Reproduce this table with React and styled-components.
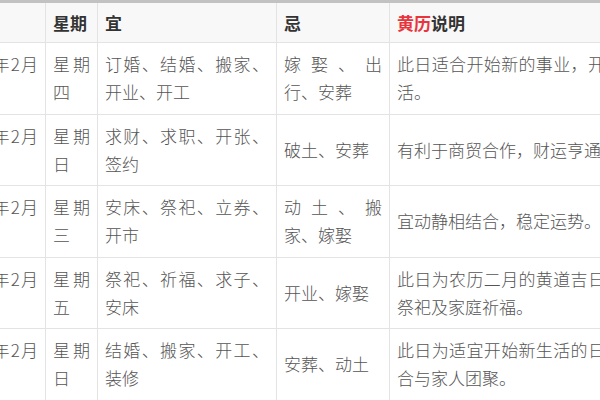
import React from "react";
import styled, { createGlobalStyle } from "styled-components";

const GlobalStyle = createGlobalStyle`
  html, body { margin: 0; padding: 0; background: #fff; }
  body { font-family: "Noto Sans CJK SC", "Noto Sans", sans-serif; }
`;

const Viewport = styled.div`
  width: 600px;
  height: 397px;
  overflow: hidden;
  background: #fff;
  border-top: 3px solid #c2c2c2;
`;

const Table = styled.table`
  border-collapse: collapse;
  table-layout: fixed;
  width: 717px;
  margin-left: -53px;
  font-size: 17px;
  color: #555;
`;

const Col = styled.col`
  width: ${(p) => p.$w}px;
`;

const HeadCell = styled.th`
  background: #f8f8f8;
  color: #333;
  font-weight: 700;
  text-align: left;
  line-height: 28px;
  padding: 6px 7px 5px;
  border: 1px solid #e3e3e3;
  border-top: none;
`;

const Cell = styled.td`
  text-align: justify;
  vertical-align: middle;
  line-height: 28.25px;
  padding: 7px 7px;
  border: 1px solid #e3e3e3;
  font-weight: 300;
`;

const Red = styled.span`
  color: #e8353c;
`;

const widths = [98, 52, 179, 113, 275];

const rows = [
  ["2025年2月20日", "星期四", "订婚、结婚、搬家、开业、开工", "嫁娶、出行、安葬", "此日适合开始新的事业，开启新生活。"],
  ["2025年2月23日", "星期日", "求财、求职、开张、签约", "破土、安葬", "有利于商贸合作，财运亨通。"],
  ["2025年2月26日", "星期三", "安床、祭祀、立券、开市", "动土、搬家、嫁娶", "宜动静相结合，稳定运势。"],
  ["2025年2月28日", "星期五", "祭祀、祈福、求子、安床", "开业、嫁娶", "此日为农历二月的黄道吉日，适合祭祀及家庭祈福。"],
  ["2025年2月16日", "星期日", "结婚、搬家、开工、装修", "安葬、动土", "此日为适宜开始新生活的日子，适合与家人团聚。"],
];

export default function App() {
  return (
    <>
      <GlobalStyle />
      <Viewport>
        <Table>
          <colgroup>
            {widths.map((w, i) => (
              <Col key={i} $w={w} />
            ))}
          </colgroup>
          <thead>
            <tr>
              <HeadCell>日期</HeadCell>
              <HeadCell>星期</HeadCell>
              <HeadCell>宜</HeadCell>
              <HeadCell>忌</HeadCell>
              <HeadCell>
                <Red>黄历</Red>说明
              </HeadCell>
            </tr>
          </thead>
          <tbody>
            {rows.map((r, i) => (
              <tr key={i}>
                {r.map((c, j) => (
                  <Cell key={j}>{c}</Cell>
                ))}
              </tr>
            ))}
          </tbody>
        </Table>
      </Viewport>
    </>
  );
}
